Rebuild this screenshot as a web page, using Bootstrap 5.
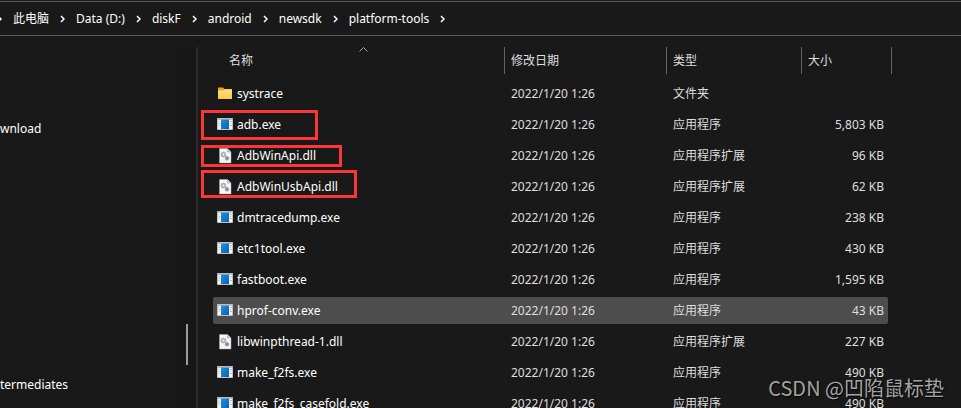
<!DOCTYPE html>
<html lang="zh-CN">
<head>
<meta charset="utf-8">
<meta name="viewport" content="width=device-width, initial-scale=1">
<title>platform-tools</title>
<link href="https://cdn.jsdelivr.net/npm/bootstrap@5.3.0/dist/css/bootstrap.min.css" rel="stylesheet">
<style>
body { background: #191919; color: #fff; font: 12px/16px "Noto Sans", "Noto Sans CJK SC", sans-serif; }
a, a:hover { color: inherit; text-decoration: none; }
.address { height: 35px; border-top: 1px solid #5a5a5a; border-bottom: 1px solid #5a5a5a; margin-top: 1px; }
.address .trail { gap: 11px; margin-left: -3px; }
.address .sep { width: 5px; height: 8px; }
.tree { width: 180px; margin-top: 11px; padding-top: 74px; }
.tree .later { margin-top: 240px; }
.rail { width: 16px; margin-top: 11px; background: #171717; padding: 277px 8px 0 6px; }
.thumb { width: 2px; height: 41px; background: #9b9b9b; }
.pane { border-left: 2px solid #2b2b2b; margin-top: 11px; padding: 0 73px 0 15px; min-width: 0; }
.files { table-layout: fixed; border-collapse: separate; border-spacing: 0 4px; margin-top: -4px; }
.files th, .files td { padding: 0; height: 27px; font-weight: 400; white-space: nowrap; vertical-align: middle; }
.files th { height: 29px; vertical-align: top; color: #dedede; }
.files th div { height: 27px; border-left: 1px solid #636363; padding: 6px 6px; }
.files th:first-child div { border-left: 0; padding-left: 16px; }
.files th:last-child div { border-right: 1px solid #636363; margin-right: -4px; }
.c-date { width: 162px; } .c-type { width: 135px; } .c-size { width: 87px; }
.files td { color: #dedede; padding-left: 7px; }
.files td:first-child { color: #fff; padding-left: 4px; border-radius: 2px 0 0 2px; }
.files td:last-child { text-align: right; padding-right: 4px; border-radius: 0 2px 2px 0; }
.files .hover td { background: #4d4d4d; }
.entry { gap: 4px; height: 27px; }
.entry svg { width: 16px; height: 16px; flex: none; }
.ring { border: 3px solid #fb3636; pointer-events: none; left: -16px; }
.ring-a { width: 117px; height: 30px; top: -1px; }
.ring-b { width: 141px; height: 22px; top: 3px; }
.ring-c { width: 156px; height: 28px; top: -3px; }
.sorted { width: 9px; height: 5px; top: 0; left: 146px; }
.credit { right: 17px; bottom: 7px; font: 20px/26px "Noto Sans CJK SC", sans-serif; color: rgba(205,205,205,.8); text-shadow: 1px 1px 1px #000; }
</style>
</head>
<body class="vh-100 overflow-hidden d-flex flex-column position-relative">
<svg class="position-absolute" width="0" height="0" aria-hidden="true">
  <defs><linearGradient id="gold" x2="0" y2="1"><stop stop-color="#ffe187"/><stop offset="1" stop-color="#fbc83e"/></linearGradient>
  <linearGradient id="blue" x2="1" y2="1"><stop stop-color="#1c92e0"/><stop offset="1" stop-color="#0763b5"/></linearGradient></defs>
  <symbol id="folder" viewBox="0 0 16 16"><path d="M1 1.500h5l1.500 1.500H15v8H1z" fill="#e8a715"/><path d="M1 4.500h5l1.500-1H15V13H1z" fill="url(#gold)"/></symbol>
  <symbol id="exe" viewBox="0 0 16 16"><path d="M0 1h16v12H0z" fill="#8d8d8d"/><path d="M.5 2.500h15v10H.5z" fill="#f5f5f5"/><path d="M0 1h16v1H0z" fill="#bbb"/><path d="M1.500 4.500h1M1.500 6.500h2M1.500 8.500h1M13 4.500h2M13 6.500h1M13 8.500h2" stroke="#b9bdc1"/><path d="M4 2.500h8V12H4z" fill="url(#blue)"/></symbol>
  <symbol id="dll" viewBox="0 0 16 16"><path d="M2.500 .5h8L14 4V15H2.500z" fill="#f7f7f7" stroke="#aaa" stroke-width=".5"/><path d="M10.500 .5V4H14" fill="#ccc" stroke="#999" stroke-width=".5"/><circle cx="6.500" cy="6.500" r="1.900" fill="none" stroke="#a3aab2" stroke-width="1.300"/><path d="M6.500 3.500v6M3.500 6.500h6M4.400 4.400l4.200 4.200M8.600 4.400L4.400 8.600" stroke="#a3aab2" stroke-width=".8"/><circle cx="6.500" cy="6.500" r="1" fill="#f7f7f7"/><circle cx="10" cy="10.300" r="1.800" fill="#838b93" stroke="#9aa2aa"/></symbol>
  <symbol id="chev" viewBox="0 0 5 8"><path d="M1 1l3 3-3 3" fill="none" stroke="#fff" stroke-width="1.500"/></symbol>
</svg>
<nav class="address d-flex align-items-center flex-shrink-0" aria-label="路径">
  <div class="trail d-flex align-items-center">
    <svg class="sep"><use href="#chev"/></svg><a href="#">此电脑</a>
    <svg class="sep"><use href="#chev"/></svg><a href="#">Data (D:)</a>
    <svg class="sep"><use href="#chev"/></svg><a href="#">diskF</a>
    <svg class="sep"><use href="#chev"/></svg><a href="#">android</a>
    <svg class="sep"><use href="#chev"/></svg><a href="#">newsdk</a>
    <svg class="sep"><use href="#chev"/></svg><a href="#">platform-tools</a>
    <svg class="sep"><use href="#chev"/></svg>
  </div>
</nav>
<div class="d-flex flex-grow-1 overflow-hidden">
  <nav class="tree flex-shrink-0" aria-label="文件夹">
    <a class="d-block" href="#">wnload</a>
    <a class="d-block later" href="#">termediates</a>
  </nav>
  <div class="rail flex-shrink-0"><div class="thumb"></div></div>
  <main class="pane flex-grow-1">
    <table class="files w-100">
      <colgroup><col><col class="c-date"><col class="c-type"><col class="c-size"></colgroup>
      <thead><tr>
        <th scope="col"><div class="position-relative">名称<svg class="sorted position-absolute" viewBox="0 0 9 5"><path d="M.5 4.500l4-4 4 4" fill="none" stroke="#aaa"/></svg></div></th>
        <th scope="col"><div>修改日期</div></th><th scope="col"><div>类型</div></th><th scope="col"><div>大小</div></th>
      </tr></thead>
      <tbody>
        <tr><td><div class="entry d-flex align-items-center"><svg><use href="#folder"/></svg>systrace</div></td><td>2022/1/20 1:26</td><td>文件夹</td><td></td></tr>
        <tr><td><div class="entry d-flex align-items-center position-relative"><svg><use href="#exe"/></svg>adb.exe<span class="ring ring-a position-absolute"></span></div></td><td>2022/1/20 1:26</td><td>应用程序</td><td>5,803 KB</td></tr>
        <tr><td><div class="entry d-flex align-items-center position-relative"><svg><use href="#dll"/></svg>AdbWinApi.dll<span class="ring ring-b position-absolute"></span></div></td><td>2022/1/20 1:26</td><td>应用程序扩展</td><td>96 KB</td></tr>
        <tr><td><div class="entry d-flex align-items-center position-relative"><svg><use href="#dll"/></svg>AdbWinUsbApi.dll<span class="ring ring-c position-absolute"></span></div></td><td>2022/1/20 1:26</td><td>应用程序扩展</td><td>62 KB</td></tr>
        <tr><td><div class="entry d-flex align-items-center"><svg><use href="#exe"/></svg>dmtracedump.exe</div></td><td>2022/1/20 1:26</td><td>应用程序</td><td>238 KB</td></tr>
        <tr><td><div class="entry d-flex align-items-center"><svg><use href="#exe"/></svg>etc1tool.exe</div></td><td>2022/1/20 1:26</td><td>应用程序</td><td>430 KB</td></tr>
        <tr><td><div class="entry d-flex align-items-center"><svg><use href="#exe"/></svg>fastboot.exe</div></td><td>2022/1/20 1:26</td><td>应用程序</td><td>1,595 KB</td></tr>
        <tr class="hover"><td><div class="entry d-flex align-items-center"><svg><use href="#exe"/></svg>hprof-conv.exe</div></td><td>2022/1/20 1:26</td><td>应用程序</td><td>43 KB</td></tr>
        <tr><td><div class="entry d-flex align-items-center"><svg><use href="#dll"/></svg>libwinpthread-1.dll</div></td><td>2022/1/20 1:26</td><td>应用程序扩展</td><td>227 KB</td></tr>
        <tr><td><div class="entry d-flex align-items-center"><svg><use href="#exe"/></svg>make_f2fs.exe</div></td><td>2022/1/20 1:26</td><td>应用程序</td><td>490 KB</td></tr>
        <tr><td><div class="entry d-flex align-items-center"><svg><use href="#exe"/></svg>make_f2fs_casefold.exe</div></td><td>2022/1/20 1:26</td><td>应用程序</td><td>490 KB</td></tr>
      </tbody>
    </table>
  </main>
</div>
<div class="credit position-absolute">CSDN @凹陷鼠标垫</div>
<script src="https://cdn.jsdelivr.net/npm/bootstrap@5.3.0/dist/js/bootstrap.bundle.min.js"></script>
</body>
</html>
